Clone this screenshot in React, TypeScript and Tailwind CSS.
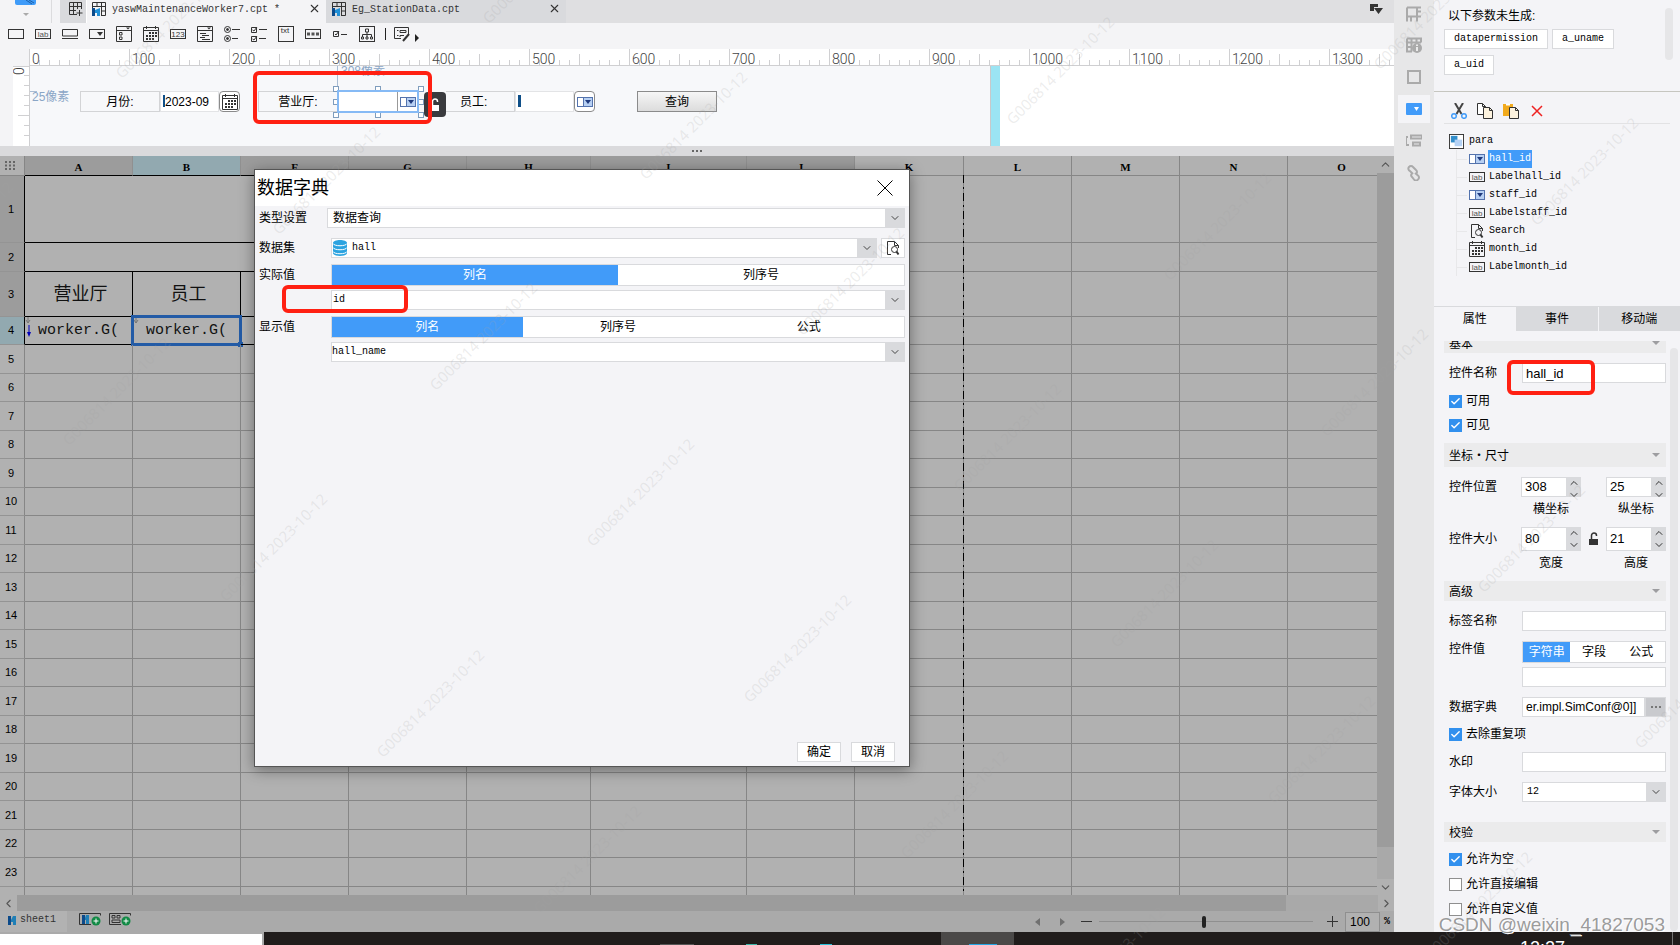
// src/App.tsx
import React, { useState } from 'react';
import { Check, ChevronDown, ChevronLeft, ChevronRight, ChevronUp, X } from 'lucide-react';

const COLUMNS = [
  { name: 'A', width: 108 },
  { name: 'B', width: 108 },
  { name: 'F', width: 108 },
  { name: 'G', width: 118 },
  { name: 'H', width: 124 },
  { name: 'I', width: 156 },
  { name: 'J', width: 108 },
  { name: 'K', width: 109 },
  { name: 'L', width: 108 },
  { name: 'M', width: 108 },
  { name: 'N', width: 108 },
  { name: 'O', width: 108 },
];

const ROW_HEIGHTS = [67, 29, 45, 28];
const ROWS = Array.from({ length: 24 }, (_, i) => i + 1);
const rowHeight = (row: number) => ROW_HEIGHTS[row - 1] ?? (row % 2 ? 29 : 28);

/* ---------- icons ---------- */

type IconProps = { children: React.ReactNode; className?: string; box?: string };

const Icon = ({ children, className = 'h-4 w-4', box = '0 0 16 16' }: IconProps) => (
  <svg className={className} viewBox={box} fill="none" stroke="#333" strokeWidth="1" aria-hidden="true">
    {children}
  </svg>
);

const LabIcon = () => (
  <Icon>
    <rect x="0.5" y="3.5" width="15" height="9" />
    <text x="8" y="11" textAnchor="middle" fontSize="8" fontFamily="Liberation Sans" fontWeight="400" fill="#555" stroke="none">lab</text>
  </Icon>
);

const ComboIcon = () => (
  <Icon>
    <rect x="0.5" y="3.5" width="15" height="9" fill="#fff" stroke="#5473ad" />
    <rect x="6.5" y="3.5" width="9" height="9" fill="#b7d0f3" stroke="#5473ad" />
    <path d="M8 6h6l-3 4z" fill="#1f3a7d" stroke="none" />
  </Icon>
);

const CalendarIcon = () => (
  <Icon>
    <path d="M0.5 1.5h15v14h-15zM0.5 4.5h15" />
    <path d="M3.5 0v3M12.5 0v3" />
    <path d="M6 7h8M3 10h11M3 13h8" strokeWidth="2" strokeDasharray="2 1" />
  </Icon>
);

const SearchPageIcon = () => (
  <Icon>
    <path d="M6 14.5H2.5v-13h7l4 4V8M9.5 1.5v4h4" />
    <circle cx="9.5" cy="9.5" r="3" />
    <path d="M11.5 11.5l2 3" strokeWidth="2" />
  </Icon>
);

const ReportIcon = () => (
  <Icon className="h-[14px] w-[14px]" box="0 0 14 14">
    <path d="M0.5 6V.5h13v13H9M.5 4.5h13M5 .5v4M9.5 .5v13M9.5 9h4" />
    <path d="M0 6h3v8H0z" fill="#0c4a8a" stroke="none" />
    <path d="M3 8l5-2v8H5v-3H3z" fill="#1f8fd6" stroke="none" />
  </Icon>
);

const OpenLock = ({ color }: { color: string }) => (
  <svg className="h-[14px] w-[10px]" viewBox="0 0 10 14" fill="none" aria-hidden="true">
    <path d="M0 7h9v6H0z" fill={color} />
    <path d="M2.5 7V3.5a2.5 2.5 0 0 1 5 0V4" stroke={color} strokeWidth="1.5" />
  </svg>
);

const TOOLS: { name: string; icon: React.ReactNode }[] = [
  { name: '文本', icon: <Icon><rect x="0.5" y="3.5" width="15" height="9" /></Icon> },
  { name: '标签', icon: <LabIcon /> },
  { name: '按钮', icon: <Icon><path d="M0.5 3.5h15v6.500H.5zM0 12.5h16" /></Icon> },
  { name: '下拉框', icon: <Icon><rect x="0.5" y="3.5" width="15" height="9" /><path d="M8 6h6l-3 4z" fill="#333" stroke="none" /></Icon> },
  { name: '下拉复选', icon: <Icon><path d="M0.5.5h15v15H.5zM.5 4.5h15M3.5 6.5h2.5v2.500H3.500zM3.5 11h2.500v2.500H3.500z" /><path d="M10 1.500h4l-2 2z" fill="#333" stroke="none" /></Icon> },
  { name: '日期', icon: <CalendarIcon /> },
  { name: '数字', icon: <Icon><rect x="0.5" y="3.5" width="15" height="9" /><text x="8" y="11" textAnchor="middle" fontSize="8" fontFamily="Liberation Sans" fill="#333" stroke="none">123</text></Icon> },
  { name: '下拉树', icon: <Icon><path d="M0.5.5h15v15H.5zM.5 4.5h15M3 7.500h6M5 9.500h7M3 11.500h5M5 13.500h8" /><path d="M10 1.500h4l-2 2z" fill="#333" stroke="none" /></Icon> },
  { name: '单选', icon: <Icon><circle cx="3.5" cy="3.5" r="3" /><circle cx="3.5" cy="12.5" r="3" /><circle cx="3.5" cy="3.5" r="1" fill="#333" /><circle cx="3.5" cy="12.5" r="1" fill="#333" /><path d="M8 3.500h8M8 12.500h6" /></Icon> },
  { name: '复选', icon: <Icon><path d="M0.5 1.500h5v5h-5zM.5 10.500h5v5h-5zM1.500 4l1.500 1 3-4M1.500 13l1.500 1 3-4M8 3.500h8M8 12.500h7" /></Icon> },
  { name: '文本域', icon: <Icon><rect x="0.5" y="0.5" width="15" height="15" /><text x="7" y="7" textAnchor="middle" fontSize="8" fontFamily="Liberation Sans" fill="#333" stroke="none">txt</text></Icon> },
  { name: '密码', icon: <Icon><rect x="0.5" y="3.5" width="15" height="9" /><path d="M2 8h12" strokeWidth="3" stroke="#555" strokeDasharray="3 1.500" /></Icon> },
  { name: '复选框', icon: <Icon><path d="M1.500 5.500h5v5h-5zM3 8l1 1 3-4M9 8.500h6" /></Icon> },
  { name: '视图树', icon: <Icon><rect x="0.5" y="0.5" width="15" height="15" /><path d="M6.500 3h3v3h-3zM8 6v2.500M3.500 11V8.500h9V11M8 8.500V11M2.500 11h2v2h-2zM7 11h2v2H7zM11.500 11h2v2h-2z" /></Icon> },
];

const RAIL = [
  { name: '单元格元素', path: 'M1 1.500h14M1 1.500v14M1 10.500h14M11 .5v15M11 5.500h4M5 10.500v5' },
  { name: '单元格属性', path: 'M1 1.500h14v4M1 1.500v13h5M1 5.500h14M5.500 1.500v13M10.500 1.500v4M1 10h5' },
  { name: '悬浮元素', path: 'M2 1v14M14 1v14M1 2h14M1 14h14' },
  { name: '控件设置', path: '' },
  { name: '条件属性', path: 'M2 4H0v8h3M5 2.500h11v3H5zM7 9.500h7v3H7z' },
  { name: '超级链接', path: 'M7 9L4 6a2.500 2.500 0 0 1-1-4 2.500 2.500 0 0 1 4 0l3 3a2.500 2.500 0 0 1 0 4M9 8l3 2.500a2.500 2.500 0 0 1 0 4 2.500 2.500 0 0 1-4 0L6 12a2.500 2.500 0 0 1 0-3.500' },
];

/* ---------- small controls ---------- */

type SelectProps = { id: string; value: string; mono?: boolean; pad?: string; icon?: React.ReactNode; label?: string };

const SelectBox = ({ id, value, mono, pad = 'pl-1', icon, label }: SelectProps) => (
  <div className="relative h-5 min-w-0 flex-1">
    <select
      id={id}
      aria-label={label}
      defaultValue={value}
      className={`block h-full w-full appearance-none border border-[#d9dadd] bg-white pr-6 leading-[18px] ${pad} ${mono ? "font-['Liberation_Mono','Noto_Sans_CJK_SC',monospace] text-[10px]" : 'text-xs'}`}
    >
      <option>{value}</option>
    </select>
    {icon}
    <span className="pointer-events-none absolute inset-y-0 right-0 flex w-5 items-center justify-center bg-[#d9dadd]">
      <ChevronDown size={12} strokeWidth={2} color="#444" />
    </span>
  </div>
);

const Segments = ({ items, label }: { items: string[]; label: string }) => {
  const [active, setActive] = useState(0);
  return (
    <div role="group" aria-label={label} className="flex h-[22px] min-w-0 flex-1 border border-[#d9dadd] bg-white">
      {items.map((item, i) => (
        <button
          key={item}
          onClick={() => setActive(i)}
          className={`flex-1 whitespace-nowrap leading-5 ${active === i ? 'bg-[#419bf9] text-white' : ''}`}
        >
          {item}
        </button>
      ))}
    </div>
  );
};

const CheckRow = ({ id, label, checked }: { id: string; label: string; checked?: boolean }) => (
  <div className="flex h-6 items-center gap-1 pl-[5px]">
    <span className="relative h-[13px] w-[13px]">
      <input
        id={id}
        type="checkbox"
        defaultChecked={checked}
        className="peer block h-[13px] w-[13px] appearance-none border border-[#8f8f8f] bg-white checked:border-[#3190ee] checked:bg-[#3190ee]"
      />
      <Check size={11} strokeWidth={3} color="#fff" className="pointer-events-none absolute left-px top-px hidden peer-checked:block" />
    </span>
    <label htmlFor={id}>{label}</label>
  </div>
);

const SectionHeader = ({ title, className }: { title: string; className: string }) => (
  <h3 className={`flex shrink-0 items-center justify-between bg-[#ebebec] pl-[5px] pr-[6px] font-['Noto_Sans_CJK_SC',sans-serif] leading-4 ${className}`}>
    {title}
    <svg className="h-1 w-2" viewBox="0 0 8 4" aria-hidden="true"><path d="M0 0h8L4 4z" fill="#9d9da0" /></svg>
  </h3>
);

const FieldRow = ({ id, label, className = 'items-center', children }: { id?: string; label: string; className?: string; children: React.ReactNode }) => (
  <div className={`flex pl-[5px] ${className}`}>
    <label htmlFor={id} className="w-[73px] shrink-0">{label}</label>
    {children}
  </div>
);

const TextField = ({ id, value = '', label, size = 'text-[13px]' }: { id: string; value?: string; label?: string; size?: string }) => (
  <input
    id={id}
    aria-label={label}
    defaultValue={value}
    className={`h-5 min-w-0 flex-1 border border-[#d9dadd] bg-white pl-[3px] font-['Liberation_Sans',sans-serif] leading-4 ${size}`}
  />
);

const Spinner = ({ id, value, caption, height }: { id: string; value: string; caption: string; height: string }) => (
  <div className="w-[60px]">
    <div className={`flex ${height}`}>
      <input
        id={id}
        defaultValue={value}
        className="min-w-0 flex-1 border border-[#d9dadd] bg-white pl-[3px] font-['Liberation_Sans',sans-serif] text-[13px]"
      />
      <div className="flex w-[14px] flex-col bg-[#d9dadd]">
        <button aria-label={`${caption}增加`} className="flex flex-1 items-center justify-center"><ChevronUp size={12} color="#333" /></button>
        <button aria-label={`${caption}减少`} className="flex flex-1 items-center justify-center"><ChevronDown size={12} color="#333" /></button>
      </div>
    </div>
    <label htmlFor={id} className="flex h-6 items-center justify-center">{caption}</label>
  </div>
);

/* ---------- top area ---------- */

const TabBar = () => (
  <div className="flex h-[23px] shrink-0 bg-[#dfdfe1] font-['Liberation_Mono','Noto_Sans_CJK_SC',monospace] text-[10px] text-[#333]">
    <div className="flex w-[60px] bg-[#f4f4f6]">
      <div className="flex w-[52px] flex-col items-center gap-2 border-r border-[#dcdcde]">
        <svg className="h-[5px] w-[21px]" viewBox="0 0 21 5" aria-hidden="true">
          <path d="M0 0h21v3a2 2 0 0 1-2 2H2a2 2 0 0 1-2-2z" fill="#3f9bf8" />
          <path d="M11 0l6 4M14 0l5 3" stroke="#1b5fa8" />
        </svg>
        <svg className="h-[3px] w-[6px]" viewBox="0 0 6 3" aria-hidden="true"><path d="M0 0h6L3 3z" fill="#aaa" /></svg>
      </div>
    </div>
    <button aria-label="新建" className="flex w-[27px] items-start justify-end border-r border-white bg-[#d9dadd] pr-[3px] pt-[2px]">
      <Icon className="h-[14px] w-[14px]" box="0 0 14 14"><path d="M8 12.500H.5V.5h12V7M.5 4.500h12M.5 8.500H7M4.500.5v12M8.500.5V7M10.500 8v6M7.500 11h6" /></Icon>
    </button>
    <div className="flex w-[239px] items-start gap-[6px] bg-[#f4f4f6] pl-[5px] pr-[5px] pt-[2px]">
      <ReportIcon />
      <span className="flex-1 leading-4">yaswMaintenanceWorker7.cpt *</span>
      <button aria-label="关闭"><X size={13} strokeWidth={2} /></button>
    </div>
    <div className="flex w-[240px] items-start gap-[6px] bg-[#d9dadd] pl-[6px] pr-[5px] pt-[2px]">
      <ReportIcon />
      <span className="flex-1 leading-4">Eg_StationData.cpt</span>
      <button aria-label="关闭"><X size={13} strokeWidth={2} /></button>
    </div>
    <button aria-label="窗口列表" className="ml-auto flex items-start pr-[11px] pt-[3px]">
      <svg className="h-3 w-[13px]" viewBox="0 0 13 12" aria-hidden="true">
        <path d="M0 1h8v3H4v4H0zM4 5h9L8.500 11z" fill="#333" />
      </svg>
    </button>
  </div>
);

const WidgetToolbar = () => (
  <div className="flex h-[26px] shrink-0 items-center bg-[#f4f4f6] pb-1 pl-[2px]">
    {TOOLS.map((tool) => (
      <button key={tool.name} aria-label={tool.name} className="flex w-[27px] justify-center">{tool.icon}</button>
    ))}
    <span className="ml-[5px] h-3 w-px bg-[#222]" />
    <button aria-label="更多" className="ml-2 flex items-center gap-1">
      <Icon>
        <path d="M14.500 8V1.500H.5v11H7M3 4.500h1.500M6 4.500h6v2H6zM3 9.500h1.500M6 11V9.500h4" />
        <path d="M9 15l6-7" strokeWidth="2" />
      </Icon>
      <svg className="mt-2 h-[8px] w-[5px]" viewBox="0 0 5 8" aria-hidden="true"><path d="M1 0v8l4-4z" fill="#222" /></svg>
    </button>
  </div>
);

const Ruler = () => (
  <div className="h-[17px] shrink-0 bg-[#f4f4f6] pl-[29px]">
    <svg className="block h-[17px] w-full border-b border-[#cfcfd1] bg-white font-['Roboto',sans-serif]">
      {Array.from({ length: 140 }, (_, i) => {
        const h = i % 10 === 0 ? 17 : i % 5 === 0 ? 12 : 6;
        return <path key={i} d={`M${i * 10 + 0.5} ${17 - h}V17`} stroke="#d0d0d2" />;
      })}
      {Array.from({ length: 14 }, (_, i) => (
        <text key={i} x={i * 100 + 3} y="15" fontSize="14" fontWeight="300" fill="#444">{i * 100}</text>
      ))}
    </svg>
  </div>
);

const Handles = () => (
  <svg className="pointer-events-none absolute left-[303px] top-[20px] h-[33px] w-[91px]" viewBox="0 0 91 33" fill="#fff" stroke="#7f9dbd" aria-hidden="true">
    {[0.5, 42.5, 85.5].map((x) => [0.5, 13.5, 26.5].map((y) => (
      x === 42.5 && y === 13.5 ? null : <rect key={`${x}-${y}`} x={x} y={y} width="5" height="5" />
    )))}
  </svg>
);

/* widgets keep the coordinates they have on the parameter pane */
const ParamCanvas = () => (
  <div className="flex h-20 shrink-0 bg-white text-xs">
    <div className="w-[13px] bg-[#f4f4f6]" />
    <svg className="h-full w-[17px] border-r border-[#cfcfd1]" aria-hidden="true">
      {Array.from({ length: 8 }, (_, i) => (
        <path key={i} d={`M${i === 5 ? 5 : i === 0 ? 0 : 11} ${i * 10 - (i ? 0.5 : -0.5)}H17`} stroke="#d0d0d2" />
      ))}
      <text transform="translate(1 9) rotate(-90)" x="0" y="10" fontSize="14" fontFamily="Roboto" fontWeight="300" fill="#444">0</text>
    </svg>
    <div className="relative w-[961px] overflow-hidden border-r border-[#c8c8ca] bg-[#f7f8fa]">
      <span className="absolute left-[311px] -top-[3px] leading-4 text-[#8aa6c6]">308像素</span>
      <span className="absolute left-[2px] top-[23px] leading-4 text-[#8aa6c6]">25像素</span>
      <span className="absolute left-[307px] top-0 h-5 w-px bg-[#a9bdd4]" />
      <span className="absolute left-0 top-[25px] h-px w-[7px] bg-[#a9bdd4]" />

      <label htmlFor="month" className="absolute left-[50px] top-[25px] flex h-[21px] w-20 items-center justify-center border border-[#d3d4d6]">月份:</label>
      <input id="month" defaultValue="2023-09" className="absolute left-[130px] top-[25px] h-[21px] w-[59px] border border-[#e3e4e6] bg-white pl-1 font-['Liberation_Sans',sans-serif]" />
      <span className="absolute left-[133px] top-[29px] h-3 w-[2px] bg-[#0f4f88]" />
      <button aria-label="选择日期" className="absolute left-[189px] top-[25px] flex h-[21px] w-[21px] items-center justify-center rounded-sm border border-[#8b8b8b] bg-white"><CalendarIcon /></button>

      <label htmlFor="hall" className="absolute left-[228px] top-[25px] flex h-[21px] w-20 items-center justify-center border border-[#d3d4d6]">营业厅:</label>
      <Handles />
      <input id="hall" className="absolute left-[307px] top-[24px] h-[23px] w-[82px] border-2 border-[#86baf5] bg-white" />
      <button aria-label="营业厅下拉" className="absolute left-[367px] top-[26px] flex h-[19px] w-5 items-center justify-center border-l border-[#999]"><ComboIcon /></button>
      <span className="absolute left-[394px] top-[26px] flex h-[25px] w-[22px] items-center justify-center rounded-sm bg-[#3a3b3e]"><OpenLock color="#fff" /></span>

      <label htmlFor="staff" className="absolute left-[416px] top-[25px] flex h-[21px] w-[69px] items-center border border-l-0 border-[#d3d4d6] pl-[14px]">员工:</label>
      <input id="staff" className="absolute left-[485px] top-[25px] h-[21px] w-[59px] border border-[#e3e4e6] bg-white" />
      <span className="absolute left-[488px] top-[29px] h-3 w-[3px] bg-[#0f4f88]" />
      <button aria-label="员工下拉" className="absolute left-[544px] top-[25px] flex h-[21px] w-[21px] items-center justify-center rounded-sm border border-[#8b8b8b] bg-white"><ComboIcon /></button>

      <button className="absolute left-[607px] top-[25px] h-[21px] w-20 border border-[#8b8b8b] bg-linear-to-b from-[#f6f6f6] to-[#dcdcdc] leading-4">查询</button>
      <span className="pointer-events-none absolute left-[223px] top-[5px] h-[53px] w-[179px] rounded-md border-4 border-[#ff2012]" />
    </div>
    <div className="w-[9px] bg-[#9be4f3]" />
  </div>
);

/* ---------- spreadsheet ---------- */

const WorkerCell = ({ selected }: { selected?: boolean }) => (
  <>
    <svg className="absolute left-0 top-0 h-[7px] w-[6px]" viewBox="0 0 6 7" fill="none" stroke="#777" aria-hidden="true"><path d="M3 0v6M1 3l2 3 2-3" /></svg>
    {!selected && (
      <svg className="absolute left-[2px] top-[8px] h-3 w-1" viewBox="0 0 4 12" aria-hidden="true"><path d="M1.500 0h1v7H4l-2 5-2-5h1.500z" fill="#00b" /></svg>
    )}
    worker.G(
    {selected && (
      <span className="absolute -left-[2px] -top-[2px] -bottom-[2px] -right-[2px] border-[3px] border-[#235ba6]">
        <span className="absolute -bottom-[4px] -right-[4px] h-[5px] w-[5px] bg-[#235ba6]" />
      </span>
    )}
  </>
);

const SheetGrid = () => (
  <div className="relative min-w-0 flex-1 overflow-hidden bg-[#b1b1b1]">
    <table className="w-max table-fixed border-separate border-spacing-0">
      <colgroup>
        <col style={{ width: 25 }} />
        {COLUMNS.map((col) => <col key={col.name} style={{ width: col.width }} />)}
      </colgroup>
      <thead>
        <tr className="h-5">
          <th aria-label="全选" className="border-b border-r border-[#868686] bg-[#b1b1b1] p-0">
            <Icon className="ml-1 h-[9px] w-3" box="0 0 12 9"><path d="M1 1h11M1 4.500h11M1 8h11" stroke="#666" strokeWidth="2" strokeDasharray="2 2" /></Icon>
          </th>
          {COLUMNS.map((col, i) => (
            <th
              key={col.name}
              className={`border-b border-r p-0 pt-[3px] font-['Liberation_Serif',serif] text-[11px] font-bold leading-4 ${i < 7 ? 'border-b-black border-r-[#909090]' : 'border-[#868686]'} ${col.name === 'B' ? 'bg-[#92a9b0]' : i < 7 ? 'bg-[#9c9c9c]' : 'bg-[#b1b1b1]'}`}
            >
              {col.name}
            </th>
          ))}
        </tr>
      </thead>
      <tbody>
        {ROWS.map((row) => (
          <tr key={row} style={{ height: rowHeight(row) }}>
            <th
              className={`border-b border-r border-b-[#949494] p-0 pr-[2px] font-['Liberation_Sans',sans-serif] text-[11px] font-normal ${row < 5 ? 'border-r-black' : 'border-r-[#868686]'} ${row === 4 ? 'bg-[#92a9b0]' : row < 4 ? 'bg-[#9c9c9c]' : ''}`}
            >
              {row < 24 ? row : ''}
            </th>
            {COLUMNS.map((col, i) => {
              const boxed = row < 5 && i < 7;
              const merged = row < 3 && i < 6;
              return (
                <td
                  key={col.name}
                  className={`relative border-b p-0 text-center text-[#111] ${boxed ? 'border-black' : 'border-[#868686]'} ${merged ? '' : 'border-r'} ${row === 3 ? 'pl-1 text-lg leading-5' : "font-['Liberation_Mono',monospace] text-[15px] leading-5"}`}
                >
                  {row === 3 && i === 0 && '营业厅'}
                  {row === 3 && i === 1 && '员工'}
                  {row === 4 && i === 0 && <WorkerCell />}
                  {row === 4 && i === 1 && <WorkerCell selected />}
                </td>
              );
            })}
          </tr>
        ))}
      </tbody>
    </table>
    {/* page break line */}
    <svg className="absolute left-[962px] top-[19px] h-full w-[3px]" aria-hidden="true">
      <path d="M1.500 0V900" stroke="#000" strokeDasharray="8 4 2 4" />
    </svg>
  </div>
);

const SheetFooter = () => (
  <>
    <div className="flex h-4 shrink-0 bg-[#a9a9a9]">
      <button aria-label="向左滚动" className="flex w-[17px] items-center justify-center bg-[#b1b1b1]"><ChevronLeft size={13} strokeWidth={2} color="#555" /></button>
      <div className="w-[91%] bg-[#9c9c9c]" />
      <button aria-label="向右滚动" className="ml-auto flex w-4 items-center justify-center bg-[#b1b1b1]"><ChevronRight size={13} strokeWidth={2} color="#555" /></button>
    </div>
    <div className="flex h-[21px] shrink-0 items-center bg-[#aaa]">
      <button className="flex h-full w-[67px] items-center gap-1 bg-[#b2b2b2] pb-[3px] pl-2 font-['Liberation_Mono',monospace] text-[10px] text-[#333]">
        <svg className="h-[9px] w-2" viewBox="0 0 8 9" aria-hidden="true"><path d="M0 0h3v9H0z" fill="#0c4a8a" /><path d="M3 4l2-4h3v9H5V6H3z" fill="#1f7fb6" /></svg>
        sheet1
      </button>
      <button aria-label="新增报表" className="ml-3 -mt-1">
        <Icon className="h-[13px] w-[22px]" box="0 0 22 13">
          <path d="M12 11.500H.5v-11h21v2" />
          <path d="M3 2h3v9H3z" fill="#0c4a8a" stroke="none" /><path d="M6 5l1-3h3v9H7V7H6z" fill="#1f7fb6" stroke="none" />
          <circle cx="17" cy="8" r="4.500" fill="#128a45" stroke="none" /><path d="M14.500 8h5M17 5.500v5" stroke="#fff" />
        </Icon>
      </button>
      <button aria-label="新增表单" className="ml-2 -mt-1">
        <Icon className="h-[13px] w-[22px]" box="0 0 22 13">
          <path d="M12 11.500H.5v-11h21v2M3 2.500h3v2.500H3zM8 2.500h3v2.500H8zM3 7h8v2.500H3z" />
          <circle cx="17" cy="8" r="4.500" fill="#128a45" stroke="none" /><path d="M14.500 8h5M17 5.500v5" stroke="#fff" />
        </Icon>
      </button>
      <div className="ml-auto flex h-full items-center">
        <button aria-label="上一页" className="mr-5"><svg className="h-2 w-[5px]" viewBox="0 0 5 8" aria-hidden="true"><path d="M5 0v8L0 4z" fill="#707070" /></svg></button>
        <button aria-label="下一页" className="mr-4"><svg className="h-2 w-[5px]" viewBox="0 0 5 8" aria-hidden="true"><path d="M0 0v8l5-4z" fill="#707070" /></svg></button>
        <button aria-label="缩小" className="mr-[7px]"><Icon className="h-[11px] w-[11px]" box="0 0 11 11"><path d="M0 5.500h11" /></Icon></button>
        <input
          type="range"
          min="0"
          max="200"
          defaultValue="98"
          aria-label="缩放"
          className="mr-[14px] block h-px w-[214px] appearance-none bg-[#8f8f8f] [&::-webkit-slider-thumb]:h-3 [&::-webkit-slider-thumb]:w-1 [&::-webkit-slider-thumb]:appearance-none [&::-webkit-slider-thumb]:rounded-sm [&::-webkit-slider-thumb]:bg-[#222]"
        />
        <button aria-label="放大" className="mr-[7px]"><Icon className="h-[11px] w-[11px]" box="0 0 11 11"><path d="M0 5.500h11M5.500 0v11" /></Icon></button>
        <input aria-label="缩放比例" defaultValue="100" className="h-5 w-[35px] border border-[#8f8f8f] bg-[#b1b1b1] pl-1 font-['Liberation_Sans',sans-serif] text-xs" />
        <span className="w-[14px] pl-1 font-['Liberation_Mono',monospace] text-[10px] font-bold">%</span>
      </div>
    </div>
  </>
);

const DictionaryDialog = () => (
  <div role="dialog" aria-label="数据字典" className="absolute left-[254px] top-[169px] flex h-[598px] w-[656px] flex-col border border-[#555] bg-[#f4f4f7] shadow-[0_3px_14px_rgba(0,0,0,0.4)]">
    <div className="flex h-9 shrink-0 items-center justify-between bg-white pl-[2px] pr-4">
      <h2 className="text-lg">数据字典</h2>
      <button aria-label="关闭" className="flex h-4 w-4 items-center justify-center">
        <Icon><path d="M0.500.5l15 15M15.500.5l-15 15" stroke="#000" /></Icon>
      </button>
    </div>
    <div className="flex flex-1 flex-col pl-1 pr-1 pt-[2px]">
      <div className="flex items-center">
        <label htmlFor="dict-type" className="w-[68px] shrink-0">类型设置</label>
        <SelectBox id="dict-type" value="数据查询" pad="pl-[5px]" />
      </div>
      <div className="mt-[10px] flex items-center">
        <label htmlFor="dict-set" className="w-[72px] shrink-0">数据集</label>
        <SelectBox
          id="dict-set"
          value="hall"
          mono
          pad="pl-5"
          icon={
            <svg className="pointer-events-none absolute left-[2px] top-[2px] h-4 w-[14px]" viewBox="0 0 14 16" aria-hidden="true">
              <path d="M0 3v10c0 4 14 4 14 0V3c0-4-14-4-14 0z" fill="#2ba3e0" />
              <path d="M0 3.500c1 3 13 3 14 0M0 7.500c1 3 13 3 14 0M0 11.500c1 3 13 3 14 0" stroke="#fff" fill="none" />
            </svg>
          }
        />
        <button aria-label="预览" className="ml-1 flex h-5 w-6 items-center justify-center border border-[#d9dadd] bg-white"><SearchPageIcon /></button>
      </div>
      <div className="mt-[6px] flex items-center">
        <span className="w-[72px] shrink-0">实际值</span>
        <Segments label="实际值" items={['列名', '列序号']} />
      </div>
      <div className="mt-1 flex pl-[72px]">
        <SelectBox id="dict-key" label="实际值列" value="id" mono pad="pl-px" />
      </div>
      <div className="mt-[6px] flex items-center">
        <span className="w-[72px] shrink-0">显示值</span>
        <Segments label="显示值" items={['列名', '列序号', '公式']} />
      </div>
      <div className="mt-1 flex pl-[72px]">
        <SelectBox id="dict-name" label="显示值列" value="hall_name" mono pad="pl-0" />
      </div>
      <div className="mb-1 mt-auto flex justify-end gap-[10px] pr-[10px]">
        <button className="h-5 w-11 border border-[#d9dadd] bg-white leading-[18px]">确定</button>
        <button className="h-5 w-11 border border-[#d9dadd] bg-white leading-[18px]">取消</button>
      </div>
    </div>
    <span className="pointer-events-none absolute left-[27px] top-[115px] h-7 w-[126px] rounded-md border-4 border-[#ff2012]" />
  </div>
);

/* ---------- right side ---------- */

const SideRail = () => (
  <nav aria-label="属性面板" className="flex w-10 shrink-0 flex-col items-center gap-1 bg-[#e7e7e8]">
    {RAIL.map((item, i) => (
      <button key={item.name} aria-label={item.name} className={`flex w-8 items-center justify-center ${i === 0 ? 'h-[27px]' : 'h-7'} ${item.path ? '' : 'bg-[#f4f4f7]'}`}>
        {item.path ? (
          <Icon>
            <path d={item.path} stroke="#aaa" strokeWidth="2" />
            {item.name === '单元格属性' && <><circle cx="11" cy="11" r="5" fill="#aaa" stroke="none" /><path d="M11 10v4M11 7.500v1.500" stroke="#fff" strokeWidth="1.500" /></>}
          </Icon>
        ) : (
          <Icon><rect y="2" width="16" height="12" rx="1" fill="#419bf9" stroke="none" /><path d="M8 6h5l-2.500 4z" fill="#fff" stroke="none" /></Icon>
        )}
      </button>
    ))}
  </nav>
);

const TREE = [
  { name: 'hall_id', icon: <ComboIcon /> },
  { name: 'Labelhall_id', icon: <LabIcon /> },
  { name: 'staff_id', icon: <ComboIcon /> },
  { name: 'Labelstaff_id', icon: <LabIcon /> },
  { name: 'Search', icon: <SearchPageIcon /> },
  { name: 'month_id', icon: <CalendarIcon /> },
  { name: 'Labelmonth_id', icon: <LabIcon /> },
];

const WidgetTree = () => {
  const [selected, setSelected] = useState('hall_id');
  return (
    <div className="px-[10px] font-['Liberation_Mono',monospace] text-[10px]">
      <div className="flex h-8 items-center gap-[10px] border-b border-[#e2e2e4] pl-[7px] pt-[6px]">
        <button aria-label="剪切">
          <Icon><path d="M4 0l6.500 11M12 0L5.500 11" strokeWidth="2" stroke="#444" /><circle cx="3" cy="13" r="2.300" stroke="#419bf9" strokeWidth="1.500" /><circle cx="13" cy="13" r="2.300" stroke="#419bf9" strokeWidth="1.500" /></Icon>
        </button>
        <button aria-label="复制">
          <Icon><path d="M.5.5h5l3 3v8h-8z" fill="#fff" /><path d="M6.500 4.500h6l3 3v8h-9z" fill="#fdf3df" /><path d="M12.500 4.500v3h3M5.500.5v3h3" /></Icon>
        </button>
        <button aria-label="粘贴">
          <Icon><path d="M0 1h10v12H0z" fill="#f2ab1d" stroke="none" /><path d="M3 1.500h4" stroke="#fff" strokeWidth="2" /><path d="M6.500 4.500h6l3 3v8h-9z" fill="#fdf3df" /><path d="M12.500 4.500v3h3" /></Icon>
        </button>
        <button aria-label="删除">
          <Icon><path d="M3 3l10 10M13 3L3 13" stroke="#ee2222" strokeWidth="1.500" /></Icon>
        </button>
      </div>
      <div className="mt-2 flex h-[18px] items-center gap-[5px] pl-[5px]">
        <Icon className="h-[15px] w-[15px]"><rect x="0.5" y="0.5" width="15" height="15" fill="#fff" /><path d="M2 2h7v7H2z" fill="#338ecb" stroke="none" /><path d="M6 6h8v7H6z" fill="#b5d2f5" stroke="none" /></Icon>
        para
      </div>
      <ul className="ml-3 border-l border-[#e8e8ea]">
        {TREE.map((node) => (
          <li key={node.name} className="flex h-[18px] items-center">
            <span className="mr-[2px] h-px w-[10px] bg-[#e8e8ea]" />
            {node.icon}
            <button
              onClick={() => setSelected(node.name)}
              className={`ml-[3px] h-[18px] px-px ${selected === node.name ? 'bg-[#419bf9] text-white' : ''}`}
            >
              {node.name}
            </button>
          </li>
        ))}
      </ul>
    </div>
  );
};

const PropertyForm = () => (
  <div className="relative min-h-0 flex-1 overflow-hidden pl-[10px] pr-[14px] pt-[10px]">
    <div className="flex h-3 items-end overflow-hidden bg-[#ebebec]">
      <SectionHeader title="基本" className="h-5 w-full" />
    </div>
    <FieldRow id="w-name" label="控件名称" className="mt-[10px] items-center"><TextField id="w-name" value="hall_id" /></FieldRow>
    <div className="mt-[6px]">
      <CheckRow id="enabled" label="可用" checked />
      <CheckRow id="visible" label="可见" checked />
    </div>
    <SectionHeader title="坐标·尺寸" className="mt-[6px] h-6" />
    <div className="mt-[10px] flex pl-[5px]">
      <span className="w-[72px] shrink-0 leading-5">控件位置</span>
      <Spinner id="pos-x" value="308" caption="横坐标" height="h-5" />
      <span className="flex-1" />
      <Spinner id="pos-y" value="25" caption="纵坐标" height="h-5" />
    </div>
    <div className="mt-[6px] flex pl-[5px]">
      <span className="w-[72px] shrink-0 leading-6">控件大小</span>
      <Spinner id="size-w" value="80" caption="宽度" height="h-6" />
      <span className="flex h-6 flex-1 items-center justify-center"><OpenLock color="#333" /></span>
      <Spinner id="size-h" value="21" caption="高度" height="h-6" />
    </div>
    <SectionHeader title="高级" className="mt-[6px] h-5" />
    <FieldRow id="tag" label="标签名称" className="mt-[10px] items-center"><TextField id="tag" /></FieldRow>
    <FieldRow id="w-value" label="控件值" className="mt-[10px] items-start"><Segments label="控件值类型" items={['字符串', '字段', '公式']} /></FieldRow>
    <div className="mt-1 flex pl-[78px]"><TextField id="w-value" /></div>
    <FieldRow id="dict" label="数据字典" className="mt-[10px] items-center">
      <TextField id="dict" value="er.impl.SimConf@0]]" size="text-xs" />
      <button aria-label="编辑数据字典" className="flex h-5 w-[21px] items-center justify-center border border-[#d9dadd] bg-[#c9cace]">
        <svg className="h-[2px] w-[10px]" viewBox="0 0 10 2" aria-hidden="true"><path d="M0 0h2v2H0zM4 0h2v2H4zM8 0h2v2H8z" fill="#777" /></svg>
      </button>
    </FieldRow>
    <div className="mt-[5px]"><CheckRow id="distinct" label="去除重复项" checked /></div>
    <FieldRow id="mark" label="水印" className="mt-[6px] items-center"><TextField id="mark" /></FieldRow>
    <FieldRow id="font-size" label="字体大小" className="mt-[10px] items-center"><SelectBox id="font-size" value="12" mono /></FieldRow>
    <SectionHeader title="校验" className="mt-5 h-5" />
    <div className="mt-[5px] flex flex-col gap-px">
      <CheckRow id="allow-null" label="允许为空" checked />
      <CheckRow id="allow-edit" label="允许直接编辑" />
      <CheckRow id="allow-custom" label="允许自定义值" />
    </div>
    <span className="absolute bottom-px right-[2px] top-[17px] w-2 rounded bg-[#e6e6e8]" />
    <span className="pointer-events-none absolute left-[73px] top-[29px] h-[35px] w-[88px] rounded-md border-4 border-[#ff2012]" />
  </div>
);

const PARAMS = ['datapermission', 'a_uname', 'a_uid'];

const RightPanel = () => (
  <aside className="flex w-[246px] shrink-0 flex-col bg-[#f4f4f7]">
    <div className="relative h-[92px] shrink-0 border-b border-[#c6c6c0] pl-[10px] pr-6 pt-2">
      <p className="pl-1 leading-[17px]">以下参数未生成:</p>
      <div className="mt-1 flex flex-wrap gap-x-1 gap-y-[6px]">
        {PARAMS.map((name) => (
          <button key={name} className="h-5 border border-[#d9dadd] bg-white px-[9px] font-['Liberation_Mono',monospace] text-[10px] leading-[18px]">{name}</button>
        ))}
      </div>
      <span className="absolute right-[7px] top-2 h-[52px] w-2 rounded bg-[#e6e6e8]" />
    </div>
    <div className="h-[214px] shrink-0">
      <WidgetTree />
    </div>
    <div role="tablist" className="flex h-[25px] shrink-0 gap-px border-t border-[#d9dadd]">
      {['属性', '事件', '移动端'].map((tab, i) => (
        <button key={tab} role="tab" aria-selected={i === 0} className={`flex-1 ${i === 0 ? '' : 'bg-[#d9dadd]'}`}>{tab}</button>
      ))}
    </div>
    <PropertyForm />
  </aside>
);

const Taskbar = () => (
  <footer className="flex h-[13px] shrink-0 overflow-hidden bg-[#201c1b] text-white">
    <div className="h-full w-[264px] border-r-2 border-t-2 border-[#aaa] bg-white" />
    <div className="flex flex-1 items-end pl-[396px]">
      <span className="h-px w-[34px] bg-[#555]" />
      <span className="ml-[52px] h-px w-[11px] bg-[#3bb7a8]" />
      <span className="ml-[63px] h-px w-3 bg-[#26bfd8]" />
      <span className="ml-[109px] flex h-full w-[73px] items-end bg-[#4b4948] pl-7"><span className="h-px w-7 bg-[#22a7e6]" /></span>
    </div>
    <time className="mr-[107px] h-[13px] pt-1 font-['Liberation_Sans',sans-serif] text-lg leading-6">12:27</time>
    <span className="mr-[7px] w-px bg-[#777]" />
  </footer>
);

const MARKS = [-3, -2, -1, 0, 1, 2, 3, 4, 5, 6, 7].flatMap((i) =>
  [-1, 0, 1, 2, 3, 4, 5].map((j) => ({ x: 169 + i * 157 + j * 367, y: 24 + i * 156 - j * 55 }))
);

const Watermarks = () => (
  <div className="pointer-events-none absolute inset-0 select-none overflow-hidden">
    {MARKS.filter((m) => m.x > -60 && m.x < 1750 && m.y > -60 && m.y < 1010).map((m) => (
      <span
        key={`${m.x}-${m.y}`}
        className="absolute -translate-x-1/2 -translate-y-1/2 -rotate-45 whitespace-nowrap font-['Noto_Sans',sans-serif] text-[15px] text-[#a4a4a4]/20"
        style={{ left: m.x, top: m.y }}
      >
        G006814 2023-10-12
      </span>
    ))}
  </div>
);

const App: React.FC = () => {
  return (
    <div className="relative flex h-screen flex-col overflow-hidden bg-[#f4f4f6] font-['Liberation_Sans','Noto_Sans_CJK_SC',sans-serif] text-xs text-black">
      <div className="flex min-h-0 flex-1">
        <main className="relative flex min-w-0 flex-1 flex-col">
          <TabBar />
          <WidgetToolbar />
          <Ruler />
          <ParamCanvas />
          <div className="flex h-[10px] shrink-0 items-center justify-center bg-[#dadadc]">
            <svg className="h-[2px] w-[10px]" viewBox="0 0 10 2" aria-hidden="true"><path d="M0 0h2v2H0zM4 0h2v2H4zM8 0h2v2H8z" fill="#666" /></svg>
          </div>
          <div className="flex min-h-0 flex-1">
            <SheetGrid />
            <div className="flex w-[17px] shrink-0 flex-col bg-[#a9a9a9]">
              <button aria-label="向上滚动" className="flex h-[17px] items-center justify-center bg-[#b1b1b1]"><ChevronUp size={13} strokeWidth={2} color="#555" /></button>
              <div className="flex-1 bg-[#9c9c9c]" />
              <div className="h-8" />
              <button aria-label="向下滚动" className="flex h-4 items-center justify-center bg-[#b1b1b1]"><ChevronDown size={13} strokeWidth={2} color="#555" /></button>
            </div>
          </div>
          <SheetFooter />
          <DictionaryDialog />
        </main>
        <SideRail />
        <RightPanel />
      </div>
      <Taskbar />
      <Watermarks />
      <span className="pointer-events-none absolute bottom-[6px] right-[15px] font-['Liberation_Sans',sans-serif] text-[19px] leading-7 text-[#8f8f8f]/90 [text-shadow:1px_1px_0_#fff]">CSDN @weixin_41827053</span>
    </div>
  );
};

export default App;
